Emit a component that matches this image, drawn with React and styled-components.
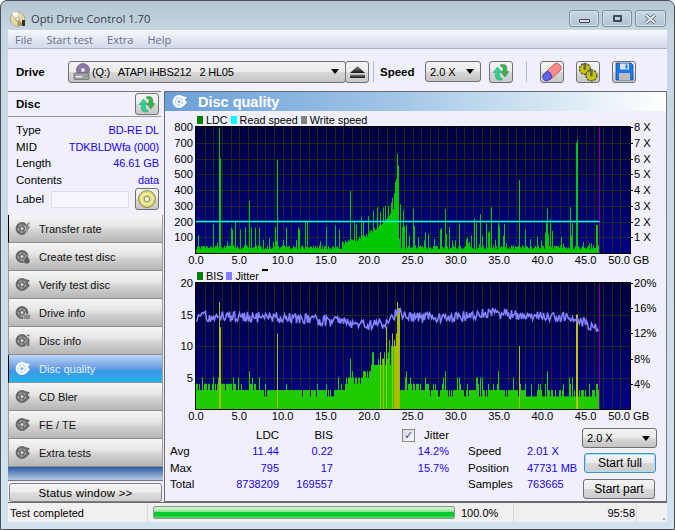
import React from 'react'
import styled, { createGlobalStyle } from 'styled-components'

const GlobalStyle = createGlobalStyle`
  html, body { margin: 0; padding: 0; background: #fff; }
  body { font-family: "Liberation Sans", Arial, sans-serif; font-size: 11.5px; color: #000; }
`

/* ---------- chart data ---------- */

const PX_PER_GB = 8.66
const SAMPLES = 403

function makeRandom(seed) {
  let s = seed
  return () => {
    s = (s * 16807) % 2147483647
    return (s - 1) / 2147483646
  }
}

// offset in px from the left of the plot -> value, read off the reference
const ldcSpikes = {
  2: 113, 17: 181, 23: 795, 24: 600, 35: 162, 36: 150, 39: 204, 44: 150, 49: 162, 53: 330, 55: 162,
  59: 162, 63: 162, 79: 165, 81: 592, 90: 162, 102: 162, 103: 150, 109: 204, 111: 200, 130: 165,
  139: 175, 143: 150, 154: 394, 158: 200, 160: 180, 165: 230, 167: 200, 172: 235, 177: 270, 181: 290,
  184: 260, 187: 290, 189: 300, 192: 300, 195: 320, 196: 350, 198: 380, 199: 450, 200: 470, 201: 630,
  202: 555, 203: 90, 204: 310, 206: 165, 207: 270, 208: 170, 210: 180, 213: 113, 217: 280, 218: 170,
  222: 100, 229: 130, 232: 120, 238: 90, 244: 150, 245: 160, 249: 279, 250: 120, 253: 165, 256: 80,
  259: 80, 263: 187, 271: 100, 273: 70, 275: 110, 278: 219, 280: 190, 284: 247, 286: 110, 290: 190,
  292: 130, 293: 140, 295: 290, 302: 190, 303: 170, 307: 110, 308: 185, 323: 464, 329: 150, 341: 105,
  345: 80, 349: 130, 350: 190, 351: 283, 352: 120, 354: 213, 356: 140, 365: 100, 374: 290, 375: 110,
  376: 190, 380: 700, 381: 720, 387: 70, 395: 60, 400: 177, 401: 177, 402: 50,
}

function buildLdc() {
  const rnd = makeRandom(4711)
  const out = []
  for (let i = 0; i < SAMPLES; i++) {
    let v = 24 + rnd() * 26
    if (rnd() < 0.08) v += 20 + rnd() * 30
    // the hump round 23 GB
    if (i > 145 && i < 203) {
      const t = (i - 145) / 57
      v = Math.max(v, 55 + 240 * t * t + rnd() * 26)
    }
    if (ldcSpikes[i]) v = ldcSpikes[i]
    out.push(v)
  }
  return out
}

const bisSpikes = {
  23: 17, 24: 13, 53: 6, 81: 12, 154: 8, 156: 6, 190: 13, 193: 11, 201: 17, 202: 16, 203: 16,
  210: 6, 249: 6, 263: 5, 284: 5, 302: 6, 323: 10, 329: 4, 351: 6, 373: 5, 376: 5, 400: 4, 401: 4,
}

function buildBis() {
  const rnd = makeRandom(991)
  const out = []
  for (let i = 0; i < SAMPLES; i++) {
    const r = rnd()
    let v = 3
    if (i < 40) v = r < 0.6 ? 4 : r < 0.68 ? 5 : 3
    else if (i < 150) v = r < 0.12 ? 4 : r < 0.17 ? 5 : r < 0.25 ? 2 : 3
    else if (i < 175) v = 4 + Math.floor(r * 1.6 + (i - 150) / 18)
    else if (i < 195) v = 7 + Math.floor(r * 2.6)
    else if (i < 201) v = 10 + Math.floor(r * 3)
    else if (i < 230) v = r < 0.3 ? 4 : r < 0.45 ? 5 : 3
    else if (i < 330) v = r < 0.2 ? 4 : r < 0.28 ? 5 : r < 0.4 ? 2 : 3
    else v = r < 0.28 ? 3 : r < 0.36 ? 4 : 2
    if (bisSpikes[i]) v = bisSpikes[i]
    out.push(v)
  }
  return out
}

function buildJitter() {
  const rnd = makeRandom(337)
  const knots = [[0, 14.7], [10, 14.5], [15, 14], [20, 13.3], [22, 13.7], [23.2, 15.4], [24.5, 14.5], [30, 14.6], [34, 15.2], [40, 14.7], [44, 14.5], [45, 13.4], [46.6, 13]]
  const pts = []
  for (let i = 0; i < SAMPLES; i += 1) {
    const gb = i / PX_PER_GB
    let k = 0
    while (k < knots.length - 2 && knots[k + 1][0] < gb) k++
    const [a, av] = knots[k]
    const [b, bv] = knots[k + 1]
    pts.push(av + ((bv - av) * (gb - a)) / (b - a) + (rnd() - 0.5) * 1.7)
  }
  return pts
}

const ldc = buildLdc()
const bis = buildBis()
const jitter = buildJitter()

/* ---------- small drawn icons ---------- */

const Arrows = () => (
  <svg width="18" height="18" viewBox="0 0 18 18">
    <path d="M1 9.5 L5.5 4 L10 9.5 H7.6 V13 Q7.6 15.2 10 15.2 V17 H7 Q3.4 17 3.4 13 V9.5 Z" fill="#2fd08c" stroke="#1a9a64" strokeWidth=".4" />
    <path d="M17 8.5 L13 14 L8.6 8.5 H11 V5.5 Q11 3.4 8.6 3.4 V1.4 H11 Q14.8 1.4 14.8 5.5 V8.5 Z" fill="#3cb04c" stroke="#1e7c30" strokeWidth=".4" />
  </svg>
)

const Eject = () => (
  <svg width="15" height="12" viewBox="0 0 15 12">
    <defs>
      <linearGradient id="ej" x1="0" y1="0" x2="0" y2="1">
        <stop offset="0" stopColor="#8a8a8a" />
        <stop offset="1" stopColor="#111" />
      </linearGradient>
    </defs>
    <path d="M7.5 0 L15 7 H0 Z" fill="url(#ej)" />
    <rect x="0" y="8.5" width="15" height="3.5" fill="url(#ej)" />
  </svg>
)

const Eraser = () => (
  <svg width="20" height="20" viewBox="0 0 20 20">
    <path d="M1 13 L12 2 Q14 0 17 2 L19 4 Q20 7 18 9 L8 18 Z" fill="#f68a8a" stroke="#b54a4a" strokeWidth=".7" />
    <path d="M1 13 L5 9 Q9 10 10 15 L7 18 Q4 20 2 18 Q0 15 1 13 Z" fill="#5a62ee" stroke="#2a2a9a" strokeWidth=".7" />
  </svg>
)

const Gears = () => (
  <svg width="20" height="20" viewBox="0 0 20 20">
    <circle cx="7" cy="7" r="5.5" fill="#c8c400" stroke="#555" strokeWidth="1.4" strokeDasharray="2.5 1" />
    <circle cx="13.5" cy="13.5" r="5.5" fill="#c8c400" stroke="#555" strokeWidth="1.4" strokeDasharray="2.5 1" />
    <rect x="5.5" y="1" width="2.6" height="7" rx="1.2" fill="#666" />
    <rect x="12" y="7.5" width="2.6" height="7" rx="1.2" fill="#666" />
  </svg>
)

const Floppy = () => (
  <svg width="19" height="19" viewBox="0 0 19 19">
    <path d="M1 1 H16 L18 3 V18 H1 Z" fill="#1f78e8" stroke="#124a9a" strokeWidth=".8" />
    <rect x="5" y="1.5" width="9" height="6" fill="#d8e4f4" />
    <rect x="10.5" y="2.5" width="2" height="4" fill="#1f78e8" />
    <rect x="4" y="11" width="11" height="7" fill="#bcbcbc" />
  </svg>
)

const BigDisc = () => (
  <svg width="18" height="18" viewBox="0 0 18 18">
    <circle cx="9" cy="9" r="8.5" fill="#dcd878" stroke="#77763a" strokeWidth=".8" />
    <circle cx="9" cy="9" r="5.5" fill="none" stroke="#f4f2b4" strokeWidth="1.4" />
    <circle cx="9" cy="9" r="2.6" fill="#fff" stroke="#77763a" strokeWidth=".8" />
  </svg>
)

const DriveIcon = () => (
  <svg width="18" height="18" viewBox="0 0 18 18">
    <circle cx="10" cy="7" r="6.5" fill="#8a78a8" stroke="#554a70" strokeWidth=".6" />
    <circle cx="10" cy="7" r="2" fill="#e4dcf0" />
    <rect x="1" y="10" width="15" height="6.5" rx="1" fill="#a2a2a2" stroke="#555" strokeWidth=".6" />
    <rect x="3" y="13" width="6" height="1.4" fill="#eee" />
    <circle cx="13.5" cy="13.5" r="1" fill="#2fc44a" />
  </svg>
)

const TitleDisc = () => (
  <svg width="16" height="16" viewBox="0 0 16 16">
    <circle cx="7.5" cy="8" r="7.3" fill="#e4d8a8" stroke="#8a8060" strokeWidth=".5" />
    <path d="M7.5 8 L2 2.5 A7.3 7.3 0 0 1 7.5 .7 Z" fill="#fff" />
    <path d="M7.5 8 L13 13 A7.3 7.3 0 0 1 7.5 15.3 Z" fill="#a89860" />
    <circle cx="7.5" cy="8" r="1.8" fill="#fff" stroke="#666" strokeWidth=".5" />
    <rect x="12" y="9" width="3" height="6" fill="#3a3020" />
  </svg>
)

const CloseMark = () => (
  <svg width="13" height="10" viewBox="0 0 13 10">
    <path d="M2 1 L11 9 M11 1 L2 9" stroke="#4c5a66" strokeWidth="3.4" />
    <path d="M2 1 L11 9 M11 1 L2 9" stroke="#eef2f5" strokeWidth="1.8" />
  </svg>
)

// small mark at the lower right of the disc, one for each kind of test
const badges = {
  'Transfer rate': <path d="M13 1.5 L10 7 H12.4 L10.4 12.5 L15.4 5.6 H12.8 L15 1.5 Z" fill="#6a6a6a" stroke="#e0e0e0" strokeWidth=".5" />,
  'Create test disc': <path d="M11.5 6 C13 8.5 15 10 15 12 A3.2 3 0 0 1 8.6 12 C8.6 10 10.4 8.5 11.5 6 Z" fill="#5c5c5c" stroke="#e0e0e0" strokeWidth=".5" />,
  'Drive info': <rect x="8.5" y="9.5" width="7" height="5" rx="1" fill="#8a8a8a" stroke="#e0e0e0" strokeWidth=".5" />,
  'Disc info': <path d="M12 5 H14.6 V13.5 H12 Z M12 1.5 H14.6 V3.6 H12 Z" fill="#6a6a6a" stroke="#e0e0e0" strokeWidth=".4" />,
}

const defaultBadge = color => <path d="M11 2 L15 3.5 L12.6 6 L15 8.5 L12 11.5 L11.6 7 Z" fill={color} />

// the grey disc every test button carries, white on the selected one
const NavDisc = ({ color = '#6a6a6a', hole = '#d4d4d4', kind }) => (
  <svg width="16" height="15" viewBox="0 0 16 15">
    <circle cx="7" cy="7.5" r="6.4" fill={color} />
    <circle cx="7" cy="7.5" r="3.6" fill="none" stroke={hole} strokeWidth=".9" strokeDasharray="3 1.4" />
    <circle cx="7" cy="7.5" r="1.5" fill={hole} />
    {badges[kind] || defaultBadge(color)}
  </svg>
)

/* ---------- charts ---------- */

const PLOT_W = 434
const PLOT_H = 126
const LEFT = 31
const TOP = 5

const xFor = i => LEFT + i
const gbX = gb => LEFT + gb * PX_PER_GB
const END_X = LEFT + 403.5

const Grid = ({ id, rows }) => (
  <>
    <defs>
      <linearGradient id={id} x1="0" y1="0" x2="0" y2="1">
        <stop offset="0" stopColor="#00003c" />
        <stop offset="1" stopColor="#000088" />
      </linearGradient>
    </defs>
    <rect x={LEFT} y={TOP} width={PLOT_W} height={PLOT_H} fill={`url(#${id})`} />
    {Array.from({ length: 49 }, (_, i) => (
      <line key={i} x1={Math.round(gbX(i + 1)) + 0.5} x2={Math.round(gbX(i + 1)) + 0.5} y1={TOP} y2={TOP + PLOT_H} stroke="#26241c" />
    ))}
    {rows.map(y => (
      <line key={y} x1={LEFT} x2={LEFT + PLOT_W} y1={y + 0.5} y2={y + 0.5} stroke="#26241c" />
    ))}
  </>
)

const Axis = ({ left, right }) => (
  <>
    <rect x={LEFT - 0.5} y={TOP - 0.5} width={PLOT_W + 1} height={PLOT_H + 1} fill="none" stroke="#000" />
    <line x1={END_X} x2={END_X} y1={TOP} y2={TOP + PLOT_H} stroke="#800080" />
    {left.map(([label, y]) => (
      <text key={label} x={LEFT - 3} y={y + 4} textAnchor="end">{label}</text>
    ))}
    {right.map(([label, y]) => (
      <g key={label}>
        <line x1={LEFT + PLOT_W} x2={LEFT + PLOT_W + 3} y1={y + 0.5} y2={y + 0.5} stroke="#000" />
        <text x={LEFT + PLOT_W + 4} y={y + 4}>{label}</text>
      </g>
    ))}
    {[0, 5, 10, 15, 20, 25, 30, 35, 40, 45].map(gb => (
      <text key={gb} x={gbX(gb)} y={TOP + PLOT_H + 11} textAnchor="middle">{gb.toFixed(1)}</text>
    ))}
    <text x={LEFT + PLOT_W} y={TOP + PLOT_H + 11} textAnchor="end">50.0</text>
    <text x={LEFT + PLOT_W + 3} y={TOP + PLOT_H + 11}>GB</text>
  </>
)

function LdcChart() {
  const y = v => TOP + PLOT_H - (v / 800) * PLOT_H
  const rows = [100, 200, 300, 400, 500, 600, 700].map(v => Math.round(y(v)))
  const bars = ldc.map((v, i) => `M${xFor(i) + 0.5} ${TOP + PLOT_H}V${y(v).toFixed(1)}`).join('')
  return (
    <ChartSvg width="502" height="146">
      <Grid id="plotA" rows={rows} />
      <path d={bars} stroke="#00c800" fill="none" />
      <Axis
        left={[100, 200, 300, 400, 500, 600, 700, 800].map(v => [String(v), Math.round(y(v))])}
        right={[1, 2, 3, 4, 5, 6, 7, 8].map(v => [`${v} X`, Math.round(y(v * 100))])}
      />
      <line x1={LEFT} x2={END_X} y1={Math.round(y(205)) + 0.5} y2={Math.round(y(205)) + 0.5} stroke="#00ffff" strokeWidth="1.5" />
    </ChartSvg>
  )
}

function BisChart() {
  const y = v => TOP + PLOT_H - (v / 20) * PLOT_H
  const rows = [5, 10, 15].map(v => Math.round(y(v)))
  const isYellow = (i, v) => v >= 12 || (i > 197 && i < 204) || i === 323 || i === 184 || i === 187
  const bars = test =>
    bis.map((v, i) => (test(i, v) ? `M${xFor(i) + 0.5} ${TOP + PLOT_H}V${y(v).toFixed(1)}` : '')).join('')
  const line = jitter.map((v, i) => `${i === 0 ? 'M' : 'L'}${xFor(i) + 0.5} ${y(v).toFixed(1)}`).join('')
  return (
    <ChartSvg width="502" height="146">
      <Grid id="plotB" rows={rows} />
      <path d={bars((i, v) => !isYellow(i, v))} stroke="#20cc00" fill="none" />
      <path d={bars(isYellow)} stroke="#a8c000" fill="none" />
      <path d={`M${xFor(380) + 1} ${TOP + PLOT_H}V${y(15)}`} stroke="#c4c400" strokeWidth="2" fill="none" />
      <path d={line} stroke="#8484ff" strokeWidth="1.5" fill="none" />
      <Axis
        left={[5, 10, 15, 20].map(v => [String(v), Math.round(y(v))])}
        right={[4, 8, 12, 16, 20].map(v => [`${v}%`, Math.round(y(v))])}
      />
    </ChartSvg>
  )
}

/* ---------- page ---------- */

export default function App() {
  const tests = ['Transfer rate', 'Create test disc', 'Verify test disc', 'Drive info', 'Disc info', 'Disc quality', 'CD Bler', 'FE / TE', 'Extra tests']
  return (
    <Window>
      <GlobalStyle />
      <TitleBar>
        <TitleDisc />
        <Title>Opti Drive Control 1.70</Title>
        <WindowButtons>
          <WinButton><MinGlyph /></WinButton>
          <WinButton><MaxGlyph /></WinButton>
          <WinButton $wide><CloseMark /></WinButton>
        </WindowButtons>
      </TitleBar>

      <Client>
        <MenuBar>
          <span>File</span>
          <span>Start test</span>
          <span>Extra</span>
          <span>Help</span>
        </MenuBar>

        <Toolbar>
          <ToolLabel $width={52}>Drive</ToolLabel>
          <Select $width={278} $height={22}>
            <DriveIcon />
            <DriveText>(Q:)&nbsp;&nbsp; ATAPI iHBS212&nbsp;&nbsp; 2 HL05</DriveText>
            <Caret />
          </Select>
          <IconButton $ml={-1}><Eject /></IconButton>
          <Separator $ml={4} />
          <ToolLabel $width={45} $ml={6}>Speed</ToolLabel>
          <Select $width={56}>
            <span>2.0 X</span>
            <Caret />
          </Select>
          <IconButton $ml={8}><Arrows /></IconButton>
          <Separator $ml={13} />
          <IconButton $ml={13}><Eraser /></IconButton>
          <IconButton $ml={12}><Gears /></IconButton>
          <IconButton $ml={12}><Floppy /></IconButton>
        </Toolbar>

        <Main>
          <Sidebar>
            <DiscHead>
              <strong>Disc</strong>
              <IconButton><Arrows /></IconButton>
            </DiscHead>
            <DiscInfo>
              <InfoRow><span>Type</span><Value>BD-RE DL</Value></InfoRow>
              <InfoRow><span>MID</span><Value>TDKBLDWfa (000)</Value></InfoRow>
              <InfoRow><span>Length</span><Value>46.61 GB</Value></InfoRow>
              <InfoRow><span>Contents</span><Value>data</Value></InfoRow>
              <LabelRow>
                <span>Label</span>
                <LabelInput />
                <IconButton><BigDisc /></IconButton>
              </LabelRow>
            </DiscInfo>
            <Nav>
              {tests.map(t => (
                <NavButton key={t} $active={t === 'Disc quality'} $marked={t === 'Transfer rate' || t === 'Disc quality'}>
                  {t === 'Disc quality' ? <NavDisc color="#fff" hole="#7ab0ea" /> : <NavDisc kind={t} />}
                  <span>{t}</span>
                </NavButton>
              ))}
            </Nav>
            <NavFooter />
            <StatusButton>Status window &gt;&gt;</StatusButton>
          </Sidebar>

          <Content>
            <PanelTitle>
              <NavDisc color="#fff" hole="#7ab0ea" />
              <span>Disc quality</span>
            </PanelTitle>
            <Legend $mt={3}>
              <Swatch $color="#008000" />LDC
              <Swatch $color="#00ffff" />Read speed
              <Swatch $color="#808080" />Write speed
            </Legend>
            <LdcChart />
            <Legend $mt={2}>
              <Swatch $color="#008000" />BIS
              <Swatch $color="#8080ff" />Jitter
              <Dash />
            </Legend>
            <BisChart />
            <Stats>
              <StatsTable>
                <span />
                <Head>LDC</Head>
                <Head>BIS</Head>
                <span>Avg</span>
                <Num>11.44</Num>
                <Num>0.22</Num>
                <span>Max</span>
                <Num>795</Num>
                <Num>17</Num>
                <span>Total</span>
                <Num>8738209</Num>
                <Num>169557</Num>
              </StatsTable>
              <JitterCol>
                <JitterHead><CheckBox>✓</CheckBox><span>Jitter</span></JitterHead>
                <Num>14.2%</Num>
                <Num>15.7%</Num>
              </JitterCol>
              <RunInfo>
                <span />
                <span />
                <span>Speed</span>
                <Blue>2.01 X</Blue>
                <span>Position</span>
                <Blue>47731 MB</Blue>
                <span>Samples</span>
                <Blue>763665</Blue>
              </RunInfo>
              <Controls>
                <Select $width={75} $height={20}>
                  <span>2.0 X</span>
                  <Caret />
                </Select>
                <StartButton $focus>Start full</StartButton>
                <StartButton $shift>Start part</StartButton>
              </Controls>
            </Stats>
          </Content>
        </Main>

        <StatusBar>
          <StatusCell $width={140}>Test completed</StatusCell>
          <ProgressCell>
            <Progress />
          </ProgressCell>
          <StatusCell $width={55}>100.0%</StatusCell>
          <StatusCell $grow $right>95:58</StatusCell>
          <Grip />
        </StatusBar>
      </Client>
    </Window>
  )
}

const Window = styled.div`
  width: 675px;
  height: 530px;
  box-sizing: border-box;
  border: 1px solid #4a4f55;
  border-radius: 7px 7px 0 0;
  background: linear-gradient(180deg, #b4c6d4 0, #c6d6e2 30px, #d2e2f0 100%);
  display: flex;
  flex-direction: column;
  padding: 0 7px 7px 7px;
  overflow: hidden;
`

const TitleBar = styled.div`
  height: 29px;
  box-sizing: border-box;
  padding: 6px 0 0 2px;
  display: flex;
  align-items: center;
  gap: 5px;
  flex: none;
`

const Title = styled.div`
  font-family: "Open Sans", sans-serif;
  font-size: 11.2px;
  color: #333d46;
`

const WindowButtons = styled.div`
  margin-left: auto;
  display: flex;
  gap: 3px;
  align-self: flex-start;
  margin-top: 3px;
  margin-right: 1px;
`

const WinButton = styled.div`
  width: ${p => (p.$wide ? 31 : 30)}px;
  height: 17px;
  box-sizing: border-box;
  border: 1px solid #7c8c9a;
  border-radius: 3px;
  background: linear-gradient(180deg, #c8d8e4, #b0c3d2);
  box-shadow: inset 0 0 0 1px #d6e2ea;
  display: flex;
  align-items: center;
  justify-content: center;
`

const MinGlyph = styled.div`
  width: 9px;
  height: 2px;
  margin-top: 5px;
  background: #d8dee4;
  border: 1px solid #445;
  border-radius: 1px;
`

const MaxGlyph = styled.div`
  width: 5px;
  height: 3px;
  background: #bccddb;
  border: 2px solid #3f4a55;
  border-radius: 1px;
`

const Client = styled.div`
  flex: 1;
  min-height: 0;
  display: flex;
  flex-direction: column;
  background: #f0f0fd;
`

const MenuBar = styled.div`
  height: 19px;
  flex: none;
  box-sizing: border-box;
  border-bottom: 1px solid #a9b1c4;
  background: linear-gradient(180deg, #f6f8fc, #d2d9ea);
  display: flex;
  align-items: center;
  gap: 14px;
  padding-left: 7px;
  font-family: "Open Sans", sans-serif;
  font-size: 11px;
  color: #65718c;
`

const Toolbar = styled.div`
  height: 42px;
  flex: none;
  box-sizing: border-box;
  padding: 3px 0 0 8px;
  display: flex;
  align-items: center;
`

const ToolLabel = styled.div`
  width: ${p => p.$width}px;
  margin-left: ${p => p.$ml || 0}px;
  font-weight: bold;
  font-size: 11.5px;
`

const Select = styled.div`
  width: ${p => p.$width}px;
  height: ${p => p.$height || 21}px;
  flex: none;
  box-sizing: border-box;
  border: 1px solid #707070;
  border-radius: 3px;
  background: linear-gradient(180deg, #f2f2f2 0, #ebebeb 48%, #d8d8d8 52%, #c4c4c4 100%);
  display: flex;
  align-items: center;
  gap: 1px;
  padding: 0 6px 0 4px;
  font-size: 11px;
`

const DriveText = styled.span`
  white-space: pre;
  letter-spacing: -0.25px;
`

const Caret = styled.div`
  margin-left: auto;
  width: 0;
  height: 0;
  border-left: 4px solid transparent;
  border-right: 4px solid transparent;
  border-top: 5px solid #000;
`

const IconButton = styled.div`
  width: 24px;
  height: 22px;
  flex: none;
  margin-left: ${p => p.$ml || 0}px;
  box-sizing: border-box;
  border: 1px solid #707070;
  border-radius: 3px;
  background: linear-gradient(180deg, #f4f4f4 0, #ebebeb 48%, #d8d8d8 52%, #c8c8c8 100%);
  display: flex;
  align-items: center;
  justify-content: center;
`

const Separator = styled.div`
  width: 1px;
  height: 21px;
  margin-left: ${p => p.$ml}px;
  background: #b8bcc8;
`

const Main = styled.div`
  flex: 1;
  min-height: 0;
  display: flex;
`

const Sidebar = styled.div`
  width: 155px;
  flex: none;
  display: flex;
  flex-direction: column;
`

const DiscHead = styled.div`
  height: 26px;
  box-sizing: border-box;
  width: 153px;
  flex: none;
  border-top: 1px solid #777;
  border-bottom: 1px solid #9a9a9a;
  display: flex;
  align-items: center;
  justify-content: space-between;
  padding: 0 2px 0 8px;
  font-size: 11.5px;
`

const DiscInfo = styled.div`
  height: 98px;
  flex: none;
  box-sizing: border-box;
  padding: 5px 4px 0 8px;
`

const InfoRow = styled.div`
  height: 16.5px;
  display: flex;
  align-items: center;
  justify-content: space-between;
`

const Value = styled.span`
  color: #1a00f0;
  font-size: 11px;
  letter-spacing: -0.1px;
`

const LabelRow = styled.div`
  display: flex;
  align-items: center;
  margin-top: -1px;
  height: 24px;
`

const LabelInput = styled.div`
  width: 79px;
  height: 17px;
  margin: 0 6px 0 7px;
  border: 1px solid #dcdcec;
  background: #f6f6fe;
  box-sizing: border-box;
`

const Nav = styled.div`
  display: flex;
  flex-direction: column;
  flex: none;
`

const NavButton = styled.div`
  height: 28px;
  box-sizing: border-box;
  border-bottom: 1px solid #8e8e8e;
  border-left: 1px solid ${p => (p.$marked ? '#000' : '#9a9a9a')};
  border-right: 1px solid #9a9a9a;
  display: flex;
  align-items: center;
  gap: 8px;
  padding-left: 6px;
  font-size: 11px;
  color: ${p => (p.$active ? '#e4f0fc' : '#111')};
  background: ${p =>
    p.$active
      ? 'linear-gradient(180deg, #bcd8fa 0, #6f9fe2 45%, #3c98e4 60%, #22b4ec 100%)'
      : 'linear-gradient(180deg, #f6f6f6 0, #e6e6e6 40%, #d0d0d0 60%, #b6b6b6 100%)'};
`

const NavFooter = styled.div`
  height: 14px;
  flex: none;
  box-sizing: border-box;
  border-bottom: 1px solid #777;
  background: linear-gradient(180deg, #2c5aa6, #b6cce4);
`

const StatusButton = styled.div`
  height: 19px;
  width: 153px;
  flex: none;
  margin: 2px 0 0 1px;
  box-sizing: border-box;
  border: 1px solid #808080;
  border-radius: 3px;
  background: linear-gradient(180deg, #f6f6f6, #ececec 48%, #dcdcdc 52%, #cfcfcf);
  display: flex;
  align-items: center;
  justify-content: center;
  font-size: 11.5px;
  letter-spacing: .2px;
`

const Content = styled.div`
  flex: 1;
  min-width: 0;
  margin-left: 1px;
  box-sizing: border-box;
  border: 1px solid #6c6c6c;
  border-right-color: #777;
  display: flex;
  flex-direction: column;
`

const PanelTitle = styled.div`
  height: 19px;
  flex: none;
  display: flex;
  align-items: center;
  gap: 10px;
  padding-left: 7px;
  background: linear-gradient(90deg, #6a9fd8 0, #a0c4e6 45%, #d8e8f4 78%, #ffffff 100%);
  color: #fff;
  font-size: 14.5px;
  font-weight: bold;
`

const Legend = styled.div`
  height: 12px;
  flex: none;
  margin-top: ${p => p.$mt}px;
  padding-left: 32px;
  display: flex;
  align-items: center;
  font-size: 10.8px;
`

const Swatch = styled.i`
  width: 6px;
  height: 8px;
  background: ${p => p.$color};
  margin: 0 3px 0 3px;
  &:first-child { margin-left: 0; }
`

const Dash = styled.i`
  width: 6px;
  height: 2px;
  background: #000;
  align-self: flex-start;
  margin: -1px 0 0 3px;
`

const ChartSvg = styled.svg`
  display: block;
  flex: none;
  margin-top: -4px;
  font-family: "Liberation Sans", sans-serif;
  font-size: 11.2px;
  fill: #000;
`

const Stats = styled.div`
  flex: 1;
  min-height: 0;
  display: flex;
  padding: 3px 0 0 5px;
`

const StatsTable = styled.div`
  width: 160px;
  flex: none;
  display: grid;
  grid-template-columns: 40px 69px 54px;
  grid-auto-rows: 16.3px;
  align-items: center;
`

const Head = styled.span`
  text-align: right;
`

const Num = styled.span`
  text-align: right;
  color: #1a00f0;
  font-size: 11px;
`

const JitterCol = styled.div`
  width: 47px;
  flex: none;
  margin-left: 72px;
  display: grid;
  grid-auto-rows: 16.3px;
  align-items: center;
`

const JitterHead = styled.div`
  display: flex;
  align-items: center;
  justify-content: space-between;
`

const CheckBox = styled.span`
  width: 11px;
  height: 11px;
  border: 1px solid #888;
  background: linear-gradient(135deg, #d8d8e0, #fafafa);
  color: #3a4f98;
  font-family: "DejaVu Sans", sans-serif;
  font-size: 11px;
  font-weight: bold;
  line-height: 11px;
  text-align: center;
`

const RunInfo = styled.div`
  width: 114px;
  flex: none;
  margin-left: 19px;
  display: grid;
  grid-template-columns: 59px 1fr;
  grid-auto-rows: 16.3px;
  align-items: center;
`

const Blue = styled.span`
  color: #1a00f0;
  font-size: 11px;
`

const Controls = styled.div`
  display: flex;
  flex-direction: column;
  align-items: flex-start;
  gap: 5px;
  padding-top: 1px;
`

const StartButton = styled.div`
  width: 72px;
  height: 20px;
  margin: ${p => (p.$shift ? '1px 0 0 1px' : '0 0 0 2px')};
  box-sizing: border-box;
  border: 1px solid ${p => (p.$focus ? '#3c90c8' : '#707070')};
  border-radius: 3px;
  box-shadow: ${p => (p.$focus ? 'inset 0 0 0 1px #a8e0f8' : 'none')};
  background: linear-gradient(180deg, #f4f4f4, #ebebeb 48%, #d8d8d8 52%, #cbcbcb);
  display: flex;
  align-items: center;
  justify-content: center;
  font-size: 12px;
`

const StatusBar = styled.div`
  height: 20px;
  flex: none;
  box-sizing: border-box;
  border-top: 1px solid #6c6c6c;
  background: #f1eff0;
  display: flex;
  align-items: center;
  font-size: 11px;
`

const StatusCell = styled.div`
  width: ${p => (p.$width ? `${p.$width}px` : 'auto')};
  flex: ${p => (p.$grow ? 1 : 'none')};
  height: 100%;
  box-sizing: border-box;
  padding: 0 1px 0 2px;
  display: flex;
  align-items: center;
  justify-content: ${p => (p.$right ? 'flex-end' : 'flex-start')};
  border-right: 1px solid #dcdada;
`

const ProgressCell = styled.div`
  width: 311px;
  flex: none;
  padding-left: 5px;
  box-sizing: border-box;
`

const Progress = styled.div`
  width: 302px;
  height: 13px;
  border: 1px solid #8a9a8a;
  box-sizing: border-box;
  border-radius: 2px;
  background: linear-gradient(180deg, #d8f4d4 0, #a4e8a0 40%, #00d030 45%, #00c828 75%, #60d870 100%);
`

const Grip = styled.div`
  width: 30px;
  height: 100%;
  background: radial-gradient(circle at 1px 1px, #aaa 1px, transparent 1px) right bottom / 4px 4px no-repeat;
`
